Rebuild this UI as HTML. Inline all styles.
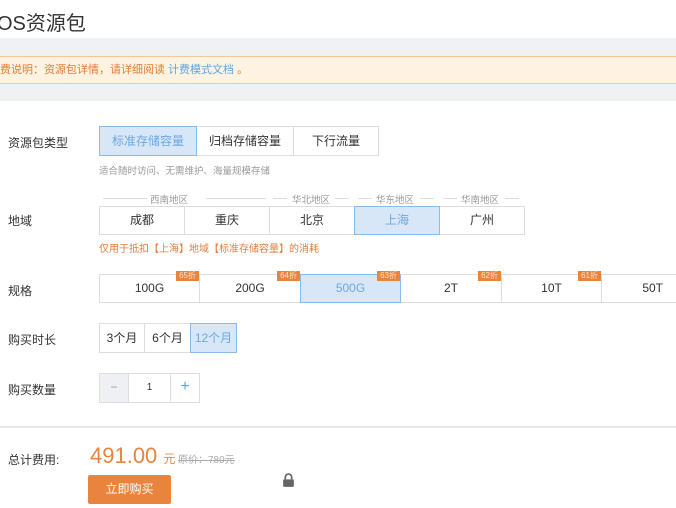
<!DOCTYPE html>
<html><head><meta charset="utf-8"><style>
*{margin:0;padding:0;box-sizing:border-box}
body{width:676px;height:508px;overflow:hidden;background:#fff;font-family:"Liberation Sans","Noto Sans CJK SC",sans-serif;color:#333;position:relative}
.a{position:absolute}
.t{left:-3px;top:7px;font-size:20px;color:#333}
.band{left:0;top:38px;width:676px;height:63px;background:#f0f1f3}
.note{left:0;top:56px;width:676px;height:28px;background:#fdf3e0;border-top:1px solid #f3c98f;border-bottom:1px solid #f3c98f;font-size:11px;color:#e37d3c;line-height:26px;padding-left:0}
.lbl{font-size:12px;color:#333;left:8px}
.btn{position:absolute;border:1px solid #ddd;background:#fff;font-size:12px;text-align:center;color:#333}
.sel{background:#d7e7f8;border:1px solid #8bbbe8;color:#6fa7df;z-index:2}
.badge{position:absolute;right:0;top:-4px;background:#e9843f;color:#fde0c8;font-size:8px;line-height:10px;padding:0 3px}
.reg{font-size:9.5px;color:#999;top:192px}
.line{position:absolute;top:198px;height:1px;background:#ddd}
</style></head><body>
<div class="a t">OS资源包</div>
<div class="a band"></div>
<div class="a note">费说明：资源包详情，请详细阅读 <span style="color:#5ea6e4">计费模式文档</span> 。</div>

<div class="a lbl" style="top:134px">资源包类型</div>
<div class="btn sel" style="left:99px;top:126px;width:98px;height:30px;line-height:28px">标准存储容量</div>
<div class="btn" style="left:196px;top:126px;width:98px;height:30px;line-height:28px">归档存储容量</div>
<div class="btn" style="left:293px;top:126px;width:86px;height:30px;line-height:28px">下行流量</div>
<div class="a" style="left:99px;top:163px;font-size:9.5px;color:#999">适合随时访问、无需维护、海量规模存储</div>

<div class="line" style="left:103px;width:44px"></div><div class="a reg" style="left:150px">西南地区</div><div class="line" style="left:206px;width:60px"></div>
<div class="line" style="left:273px;width:14px"></div><div class="a reg" style="left:292px">华北地区</div><div class="line" style="left:335px;width:14px"></div>
<div class="line" style="left:358px;width:14px"></div><div class="a reg" style="left:376px">华东地区</div><div class="line" style="left:420px;width:14px"></div>
<div class="line" style="left:443px;width:14px"></div><div class="a reg" style="left:461px">华南地区</div><div class="line" style="left:505px;width:14px"></div>

<div class="a lbl" style="top:212px">地域</div>
<div class="btn" style="left:99px;top:206px;width:86px;height:29px;line-height:27px">成都</div>
<div class="btn" style="left:184px;top:206px;width:86px;height:29px;line-height:27px">重庆</div>
<div class="btn" style="left:269px;top:206px;width:86px;height:29px;line-height:27px">北京</div>
<div class="btn sel" style="left:354px;top:206px;width:86px;height:29px;line-height:27px">上海</div>
<div class="btn" style="left:439px;top:206px;width:86px;height:29px;line-height:27px">广州</div>
<div class="a" style="left:99px;top:240px;font-size:10px;color:#e37d3c">仅用于抵扣【上海】地域【标准存储容量】的消耗</div>

<div class="a lbl" style="top:282px">规格</div>
<div class="btn" style="left:99px;top:274px;width:101px;height:29px;line-height:27px">100G<span class="badge">65折</span></div>
<div class="btn" style="left:199px;top:274px;width:102px;height:29px;line-height:27px">200G<span class="badge">64折</span></div>
<div class="btn sel" style="left:300px;top:274px;width:101px;height:29px;line-height:27px">500G<span class="badge">63折</span></div>
<div class="btn" style="left:400px;top:274px;width:102px;height:29px;line-height:27px">2T<span class="badge">62折</span></div>
<div class="btn" style="left:501px;top:274px;width:101px;height:29px;line-height:27px">10T<span class="badge">61折</span></div>
<div class="btn" style="left:601px;top:274px;width:90px;height:29px;line-height:27px;padding-right:0">&nbsp;&nbsp;&nbsp;&nbsp;50T</div>

<div class="a lbl" style="top:331px">购买时长</div>
<div class="btn" style="left:99px;top:323px;width:46px;height:30px;line-height:28px">3个月</div>
<div class="btn" style="left:144px;top:323px;width:47px;height:30px;line-height:28px">6个月</div>
<div class="btn sel" style="left:190px;top:323px;width:47px;height:30px;line-height:28px">12个月</div>

<div class="a lbl" style="top:381px">购买数量</div>
<div class="btn" style="left:99px;top:373px;width:30px;height:30px;line-height:27px;background:#eef0f3;color:#999">−</div>
<div class="btn" style="left:128px;top:373px;width:43px;height:30px;line-height:28px;font-size:10px">1</div>
<div class="btn" style="left:170px;top:373px;width:30px;height:30px;line-height:26px;color:#5ea6e4;font-size:16px">+</div>

<div class="a" style="left:0;top:426px;width:676px;height:2px;background:#e8e9eb"></div>
<div class="a lbl" style="top:451px">总计费用:</div>
<div class="a" style="left:90px;top:443px;font-size:22px;color:#e9843f">491.00 <span style="font-size:12px">元</span></div>
<div class="a" style="left:178px;top:451px;font-size:10px;color:#aaa;text-decoration:line-through">原价：780元</div>
<div class="a" style="left:88px;top:475px;width:83px;height:29px;background:#e9843f;border-radius:2px;color:#fff;font-size:12px;text-align:center;line-height:29px">立即购买</div>
<svg class="a" style="left:282px;top:473px" width="13" height="15" viewBox="0 0 12 14"><path d="M3 6V4a3 3 0 0 1 6 0v2" fill="none" stroke="#666" stroke-width="1.6"/><rect x="1" y="6" width="10" height="7" rx="1" fill="#666"/></svg>
</body></html>
